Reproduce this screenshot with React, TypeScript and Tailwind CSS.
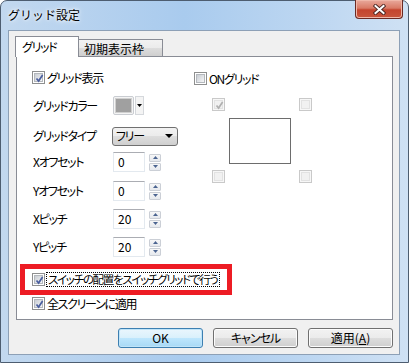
import clsx from "clsx";

const ui = "font-['Noto_Sans_CJK_JP',sans-serif] [font-feature-settings:'palt'] text-[12px] leading-[14px] tracking-[-1.3px] text-black whitespace-nowrap";

function Check({ checked, disabled }: { checked?: boolean; disabled?: boolean }) {
  return (
    <span
      className={clsx(
        "relative flex h-[13px] w-[13px] shrink-0 items-center justify-center border",
        disabled ? "border-[#c9c9c9] bg-[#f7f7f7]" : "border-[#8e8f8f] bg-white"
      )}
    >
      <span
        className={clsx(
          "h-[9px] w-[9px] border",
          disabled
            ? "border-[#e2e2e2] bg-[#f1f1f1]"
            : "border-[#b4b8bd] bg-[linear-gradient(135deg,#c9cdd3,#f5f6f7)]"
        )}
      />
      {checked && (
        <svg className="absolute left-[1px] top-[1px]" width="11" height="11" viewBox="0 0 11 11">
          <path
            d="M2.5 5.5 L4.6 8 L8.6 2"
            fill="none"
            stroke={disabled ? "#b0b0b0" : "#4a5e9e"}
            strokeWidth="1.7"
          />
        </svg>
      )}
    </span>
  );
}

function Spin() {
  const arrow = (up: boolean) => (
    <span className="flex h-[8px] w-[12px] items-center justify-center rounded-[1px] border border-[#cbcfd6] bg-[linear-gradient(#f7f7f7,#e6e9ee)]">
      <svg width="5" height="3" viewBox="0 0 5 3">
        <path d={up ? "M0 3 L2.5 0 L5 3Z" : "M0 0 L5 0 L2.5 3Z"} fill="#4b6490" />
      </svg>
    </span>
  );
  return (
    <div className="ml-[4px] flex flex-col gap-[1px]">
      {arrow(true)}
      {arrow(false)}
    </div>
  );
}

function NumRow({ label, value, mt }: { label: string; value: string; mt: string }) {
  return (
    <div className={clsx("flex h-[20px] items-center", mt)}>
      <span className="ml-[1px] w-[80px]">{label}</span>
      <span className="flex h-[20px] w-[32px] items-center border border-[#e3e9ef] border-t-[#abadb3] bg-white pl-[4px] tracking-normal">
        {value}
      </span>
      <Spin />
    </div>
  );
}

function Button({ children, primary }: { children: React.ReactNode; primary?: boolean }) {
  return (
    <button
      className={clsx(
        "flex h-[20px] w-[85px] items-center justify-center rounded-[3px] border",
        primary
          ? "border-[#3c7fb1] bg-[linear-gradient(#eaf6fd_0%,#d9f0fc_50%,#bee6fd_50%,#a7d9f5_100%)] shadow-[inset_0_0_0_1px_#bfe4f9]"
          : "border-[#707070] bg-[linear-gradient(#f2f2f2_0%,#ebebeb_50%,#dddddd_50%,#cfcfcf_100%)] shadow-[inset_0_0_0_1px_#fcfcfc]"
      )}
    >
      {children}
    </button>
  );
}

export default function App() {
  return (
    <div className={clsx(ui, "flex h-[363px] w-[409px] flex-col rounded-t-[7px] border border-[#4d5d70] bg-[linear-gradient(90deg,#c2d8ef_0%,#a9cbee_45%,#bcd6f1_75%,#cfe1f4_100%)] pb-[7px] pl-[7px] pr-[8px]")}>
      {/* title bar */}
      <div className="flex h-[29px] shrink-0 items-start">
        <span className="mt-[7px] tracking-normal [font-feature-settings:normal] [text-shadow:0_0_6px_#ffffff,0_0_3px_#ffffff]">
          グリッド設定
        </span>
        <span className="ml-auto -mt-px mr-[-3px] flex h-[19px] w-[48px] items-center justify-center rounded-b-[4px] border border-t-0 border-[#6b2a24] bg-[linear-gradient(#e9a99c_0%,#d97a66_45%,#c4442e_55%,#c8553c_100%)] shadow-[inset_0_0_0_1px_#f0b7a9]">
          <svg width="13" height="11" viewBox="0 0 13 11">
            <path d="M2.5 2 L10.5 9 M10.5 2 L2.5 9" stroke="#4a2522" strokeWidth="3.8" strokeLinecap="square" />
            <path d="M2.5 2 L10.5 9 M10.5 2 L2.5 9" stroke="#ffffff" strokeWidth="2" strokeLinecap="square" />
          </svg>
        </span>
      </div>

      {/* client area */}
      <div className="flex flex-1 flex-col border border-[#8da0b6] bg-[#f0f0f0] pl-[6px] pt-[5px]">
        {/* tabs */}
        <div className="flex h-[20px] items-end">
          <div className="relative z-10 mb-[-1px] flex h-[21px] w-[64px] items-start border border-b-0 border-[#898c95] bg-white pl-[6px] pt-[3px]">
            グリッド
          </div>
          <div className="flex h-[17px] w-[84px] items-start border border-l-0 border-b-0 border-[#898c95] bg-[linear-gradient(#f2f2f2_0%,#ebebeb_50%,#dddddd_50%,#cfcfcf_100%)] pl-[5px] pt-[2px] tracking-normal">
            初期表示枠
          </div>
        </div>

        {/* panel */}
        <div className="ml-[1px] flex h-[264px] w-[377px] flex-col border border-[#898c95] bg-white pl-[15px]">
          <div className="flex">
            {/* left column */}
            <div className="flex w-[162px] shrink-0 flex-col">
              <div className="mt-[14px] flex h-[13px] items-center gap-[2px]">
                <Check checked />
                <span>グリッド表示</span>
              </div>
              <div className="mt-[12px] flex h-[19px] items-center">
                <span className="ml-[1px] w-[80px]">グリッドカラー</span>
                <span className="flex h-[19px] items-center">
                  <span className="flex h-[19px] w-[21px] items-center justify-center rounded-[2px] border border-[#c9ccd1] bg-[#f4f4f4]">
                    <span className="h-[15px] w-[17px] border border-[#d0d0d0] bg-[#a0a0a0]" />
                  </span>
                  <span className="ml-[1px] flex h-[19px] w-[9px] items-center justify-center border border-[#d5d8dc] bg-[#f4f4f4]">
                    <svg width="5" height="3" viewBox="0 0 5 3">
                      <path d="M0 0 L5 0 L2.5 3Z" fill="#000" />
                    </svg>
                  </span>
                </span>
              </div>
              <div className="mt-[12px] flex h-[18px] items-center">
                <span className="ml-[1px] w-[79px]">グリッドタイプ</span>
                <span className="flex h-[19px] w-[66px] items-center rounded-[3px] border border-[#707070] bg-[linear-gradient(#f2f2f2_0%,#ebebeb_50%,#dddddd_50%,#cfcfcf_100%)] pl-[3px] pr-[4px]">
                  <span>フリー</span>
                  <svg className="ml-auto" width="8" height="4" viewBox="0 0 8 4">
                    <path d="M0 0 L8 0 L4 4Z" fill="#000" />
                  </svg>
                </span>
              </div>
              <NumRow label="Xオフセット" value="0" mt="mt-[7px]" />
              <NumRow label="Yオフセット" value="0" mt="mt-[9px]" />
              <NumRow label="Xピッチ" value="20" mt="mt-[8px]" />
              <NumRow label="Yピッチ" value="20" mt="mt-[8px]" />
            </div>

            {/* right column */}
            <div className="flex flex-col">
              <div className="mt-[15px] flex h-[13px] items-center gap-[2px]">
                <Check />
                <span>ONグリッド</span>
              </div>
              <div className="ml-[18px] mt-[13px] flex gap-[74px]">
                <Check checked disabled />
                <Check disabled />
              </div>
              <div className="ml-[35px] mt-[7px] h-[46px] w-[62px] border border-[#6d6d6d]" />
              <div className="ml-[18px] mt-[6px] flex gap-[74px]">
                <Check disabled />
                <Check disabled />
              </div>
            </div>
          </div>

          <div className="-ml-[12px] mt-[7px] flex h-[31px] w-[212px] items-center border-[5px] border-[#ed1c24] pl-[7px]">
            <Check checked />
            <span className="ml-[1px] border border-dotted border-black px-px text-[11.5px] leading-[13px] tracking-[-1.3px]">
              スイッチの配置をスイッチグリッドで行う
            </span>
          </div>
          <div className="mt-[2px] flex h-[13px] items-center gap-[2px]">
            <Check checked />
            <span>全スクリーンに適用</span>
          </div>
        </div>

        {/* buttons */}
        <div className="ml-[1px] mt-[8px] flex w-[377px] justify-end gap-[10px] tracking-normal">
          <Button primary>OK</Button>
          <Button>
            <span className="tracking-[-1px]">キャンセル</span>
          </Button>
          <Button>
            <span>
              適用(<span className="underline">A</span>)
            </span>
          </Button>
        </div>
      </div>
    </div>
  );
}
